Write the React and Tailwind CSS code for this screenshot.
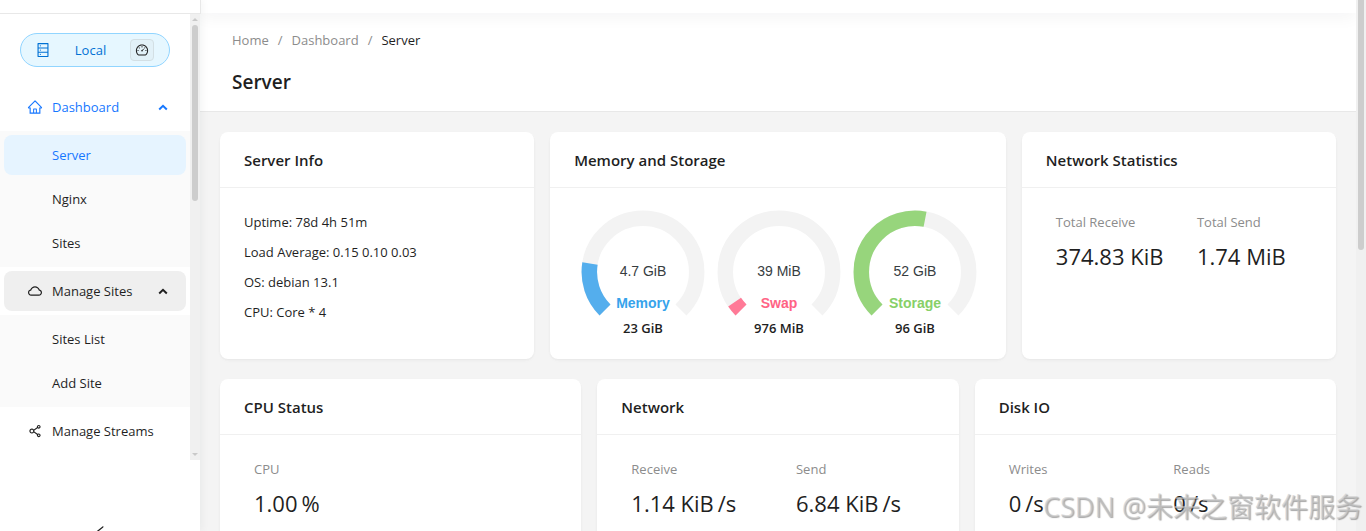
import React from "react";
import {
  AiOutlineCloud,
  AiOutlineDashboard,
  AiOutlineDatabase,
  AiOutlineHome,
  AiOutlineLeft,
  AiOutlineShareAlt,
} from "react-icons/ai";

const gauges = [
  { name: "Memory", used: "4.7 GiB", total: "23 GiB", percent: 20, stroke: "#54aeed", label: "text-[#36a3eb]" },
  { name: "Swap", used: "39 MiB", total: "976 MiB", percent: 4, stroke: "#ff7a97", label: "text-[#ff6385]" },
  { name: "Storage", used: "52 GiB", total: "96 GiB", percent: 54, stroke: "#97d57c", label: "text-[#87d068]" },
];

const serverInfo = [
  "Uptime: 78d 4h 51m",
  "Load Average: 0.15 0.10 0.03",
  "OS: debian 13.1",
  "CPU: Core * 4",
];

const Chevron = () => (
  <svg className="ml-auto" width="10" height="10" viewBox="0 0 10 10" fill="none" aria-hidden="true">
    <path d="M1.2 7.5 L5 3.8 L8.8 7.5" stroke="currentColor" strokeWidth="2" />
  </svg>
);

const MenuItem = ({ icon: Icon, children, className = "", open }) => (
  <button
    type="button"
    aria-expanded={open}
    className={`mx-1 my-1 flex h-10 items-center rounded-lg pl-[23px] pr-[18px] text-left ${className}`}
  >
    <Icon className="mr-[9px] size-4" />
    <span className="pt-0.5">{children}</span>
    {open && <Chevron />}
  </button>
);

const SubMenu = ({ items }) => (
  <div className="flex flex-col gap-1 bg-[#fafafa] px-1 py-1">
    {items.map((item) => (
      <a
        key={item.name}
        href="#"
        className={`flex h-10 items-center rounded-lg pl-12 pt-0.5 ${
          item.active ? "bg-[#e6f4ff] text-[#1677ff]" : ""
        }`}
      >
        {item.name}
      </a>
    ))}
  </div>
);

const Sidebar = () => (
  <aside className="z-10 flex w-[200px] shrink-0 flex-col bg-white shadow-[2px_0_8px_0_rgba(29,35,41,0.05)]">
    <div className="-mr-px h-[14px] shrink-0 border-b border-r border-[#e8e8e8] bg-white" />
    <div className="flex min-h-0 flex-1">
      <div className="min-w-0 flex-1 overflow-hidden pt-[19px]">
        <div className="mx-5 flex h-[34px] w-[150px] items-center rounded-full border border-[#91d5ff] bg-[#e6f7ff] pl-[14px] pr-[15px] text-[#0071d4]">
          <AiOutlineDatabase className="size-4" />
          <span className="flex-1 pt-0.5 text-center">Local</span>
          <button
            type="button"
            aria-label="Node status"
            className="flex h-[22px] w-6 items-center justify-center rounded border border-[#d3dfe4] bg-[#e2f1f8] text-[#1f1f1f]"
          >
            <AiOutlineDashboard className="size-[14px]" />
          </button>
        </div>
        <nav className="mt-4 flex flex-col">
          <MenuItem icon={AiOutlineHome} open className="text-[#1677ff]">
            Dashboard
          </MenuItem>
          <SubMenu items={[{ name: "Server", active: true }, { name: "Nginx" }, { name: "Sites" }]} />
          <MenuItem icon={AiOutlineCloud} open className="bg-[#efefef]">
            Manage Sites
          </MenuItem>
          <SubMenu items={[{ name: "Sites List" }, { name: "Add Site" }]} />
          <MenuItem icon={AiOutlineShareAlt}>Manage Streams</MenuItem>
        </nav>
      </div>
      <div className="flex w-2.5 flex-col items-center bg-[#f0f0f0] py-1" aria-hidden="true">
        <svg width="6" height="3" viewBox="0 0 6 3" fill="#c9c9c9">
          <path d="M0 3 L3 0 L6 3Z" />
        </svg>
        <div className="mt-1 h-[176px] w-1.5 rounded-full bg-[#cdcdcd]" />
        <svg className="mt-auto" width="6" height="3" viewBox="0 0 6 3" fill="#c9c9c9">
          <path d="M0 0 L3 3 L6 0Z" />
        </svg>
      </div>
    </div>
    <div className="flex h-[71px] shrink-0 items-start justify-center overflow-hidden pt-16">
      <button type="button" aria-label="Collapse menu">
        <AiOutlineLeft className="size-4" />
      </button>
    </div>
  </aside>
);

const Card = ({ title, children }) => (
  <div className="px-2">
    <section className="h-full rounded-lg bg-white shadow-[0_1px_2px_0_rgba(0,0,0,0.03),0_1px_6px_-1px_rgba(0,0,0,0.02),0_2px_4px_0_rgba(0,0,0,0.02)]">
      <h2 className="flex h-14 items-center border-b border-[#f0f0f0] px-6 pt-0.5 text-[15px] font-semibold">
        {title}
      </h2>
      {children}
    </section>
  </div>
);

const Statistic = ({ title, value, suffix }) => (
  <div className="pl-2.5">
    <dt className="leading-[22px] text-[#8c8c8c]">{title}</dt>
    <dd className="mt-1 whitespace-nowrap text-[22px] leading-[38px]">
      {value}
      {suffix && <span className="ml-1">{suffix}</span>}
    </dd>
  </div>
);

const Statistics = ({ items }) => (
  <dl className="grid grid-cols-2 gap-4 px-6 py-[23px]">
    {items.map((item) => (
      <Statistic key={item.title} {...item} />
    ))}
  </dl>
);

const Gauge = ({ name, used, total, percent, stroke, label }) => (
  <div className="flex w-[136px] flex-col items-center">
    <div className="relative">
      <svg width="124" height="124" viewBox="-62 -62 124 124" fill="none" strokeWidth="15.5" aria-hidden="true">
        <circle r="53.7" stroke="#f3f3f3" pathLength="360" strokeDasharray="270 360" transform="rotate(135)" />
        <circle
          r="53.7"
          stroke={stroke}
          pathLength="360"
          strokeDasharray={`${percent * 2.7} 360`}
          transform="rotate(135)"
        />
      </svg>
      <div className="absolute inset-x-0 top-[51px] flex flex-col items-center gap-3 font-['Liberation_Sans',sans-serif] text-sm">
        <span className="text-[#373d3f]">{used}</span>
        <span className={`font-bold ${label}`}>{name}</span>
      </div>
    </div>
    <span className="-mt-[17px] font-semibold leading-[22px]">{total}</span>
  </div>
);

const App = () => (
  <div className="relative flex h-screen overflow-hidden bg-[#f4f4f4] font-['Open_Sans','Noto_Sans_CJK_SC',sans-serif] text-[13px] text-[#1f1f1f]">
    <Sidebar />
    <div className="flex min-w-0 flex-1 flex-col">
      <div className="z-[5] h-[13px] shrink-0 bg-white shadow-[0_4px_16px_0_rgba(0,21,41,0.05)]" />
      <header className="shrink-0 border-b border-[#e8e8e8] bg-white px-8 pb-[13px] pt-4">
        <nav aria-label="Breadcrumb" className="flex gap-[9px] leading-[22px] text-[#8c8c8c]">
          <a href="#">Home</a>
          <span>/</span>
          <a href="#">Dashboard</a>
          <span>/</span>
          <span className="text-[#1f1f1f]">Server</span>
        </nav>
        <h1 className="mt-[15px] text-[19px] font-semibold leading-8">Server</h1>
      </header>
      <main className="flex flex-col gap-5 px-3 pt-5">
        <div className="grid grid-cols-[7fr_10fr_7fr]">
          <Card title="Server Info">
            <div className="px-6 pb-8 pt-[19px] leading-[30px]">
              {serverInfo.map((line) => (
                <p key={line}>{line}</p>
              ))}
            </div>
          </Card>
          <Card title="Memory and Storage">
            <div className="flex justify-center pl-0.5 pt-[22px]">
              {gauges.map((gauge) => (
                <Gauge key={gauge.name} {...gauge} />
              ))}
            </div>
          </Card>
          <Card title="Network Statistics">
            <Statistics
              items={[
                { title: "Total Receive", value: "374.83 KiB" },
                { title: "Total Send", value: "1.74 MiB" },
              ]}
            />
          </Card>
        </div>
        <div className="grid grid-cols-3">
          <Card title="CPU Status">
            <Statistics items={[{ title: "CPU", value: "1.00", suffix: "%" }]} />
          </Card>
          <Card title="Network">
            <Statistics
              items={[
                { title: "Receive", value: "1.14 KiB", suffix: "/s" },
                { title: "Send", value: "6.84 KiB", suffix: "/s" },
              ]}
            />
          </Card>
          <Card title="Disk IO">
            <Statistics
              items={[
                { title: "Writes", value: "0", suffix: "/s" },
                { title: "Reads", value: "0", suffix: "/s" },
              ]}
            />
          </Card>
        </div>
      </main>
    </div>
    <div className="z-10 flex w-2.5 shrink-0 justify-center bg-[#f0f0f0]" aria-hidden="true">
      <div className="h-[250px] w-1.5 rounded-b-full bg-[#cdcdcd]" />
    </div>
    <p className="absolute bottom-1 right-1 z-20 whitespace-nowrap text-[27px] leading-10 text-[#c8c8c8]/60 [text-shadow:1px_1px_1px_rgba(110,110,110,0.6)]">
      CSDN @未来之窗软件服务
    </p>
  </div>
);

export default App;
